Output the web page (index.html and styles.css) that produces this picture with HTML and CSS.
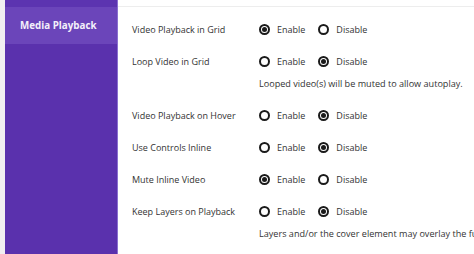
FILE: index.html
```html
<!DOCTYPE html>
<html>
<head>
<meta charset="utf-8">
<link rel="stylesheet" href="styles.css">
</head>
<body>
<div class="page">
  <div class="gutter"></div>
  <nav class="sidebar">
    <div class="sidebar-top"></div>
    <div class="nav-item active">Media Playback</div>
  </nav>
  <main class="content">
    <div class="row">
      <div class="label">Video Playback in Grid</div>
      <div class="options">
        <span class="opt"><span class="radio checked"></span>Enable</span>
        <span class="opt"><span class="radio"></span>Disable</span>
      </div>
    </div>
    <div class="row">
      <div class="label">Loop Video in Grid</div>
      <div class="options">
        <span class="opt"><span class="radio"></span>Enable</span>
        <span class="opt"><span class="radio checked"></span>Disable</span>
      </div>
    </div>
    <div class="note">Looped video(s) will be muted to allow autoplay.</div>
    <div class="row">
      <div class="label">Video Playback on Hover</div>
      <div class="options">
        <span class="opt"><span class="radio"></span>Enable</span>
        <span class="opt"><span class="radio checked"></span>Disable</span>
      </div>
    </div>
    <div class="row">
      <div class="label">Use Controls Inline</div>
      <div class="options">
        <span class="opt"><span class="radio"></span>Enable</span>
        <span class="opt"><span class="radio checked"></span>Disable</span>
      </div>
    </div>
    <div class="row">
      <div class="label">Mute Inline Video</div>
      <div class="options">
        <span class="opt"><span class="radio checked"></span>Enable</span>
        <span class="opt"><span class="radio"></span>Disable</span>
      </div>
    </div>
    <div class="row">
      <div class="label">Keep Layers on Playback</div>
      <div class="options">
        <span class="opt"><span class="radio"></span>Enable</span>
        <span class="opt"><span class="radio checked"></span>Disable</span>
      </div>
    </div>
    <div class="note">Layers and/or the cover element may overlay the full video area.</div>
  </main>
</div>
</body>
</html>
```

FILE: styles.css
```css
html, body {
  margin: 0;
  padding: 0;
  background: #ffffff;
}
body {
  font-family: "Open Sans", "Noto Sans", sans-serif;
  color: #333333;
  overflow: hidden;
}
.page {
  display: flex;
  height: 254px;
  width: 474px;
  overflow: hidden;
}
.gutter {
  width: 5px;
  flex: none;
  background: #f1eff1;
}
.sidebar {
  width: 112px;
  flex: none;
  background: #5a31ad;
  border-right: 1px solid #8a6fd0;
  display: flex;
  flex-direction: column;
}
.sidebar-top {
  height: 7px;
  background: #5c34b0;
}
.nav-item {
  height: 37px;
  display: flex;
  align-items: center;
  padding-left: 15px;
  font-size: 9.8px;
  font-weight: 700;
  color: #f4f0fb;
}
.nav-item.active {
  background: #6b45ba;
}
.content {
  flex: 1;
  min-width: 0;
  margin-top: 6px;
  border-top: 1px solid #ededed;
  padding: 6px 0 0 14px;
  font-size: 9px;
  white-space: nowrap;
  overflow: hidden;
}
.row {
  height: 32px;
  display: flex;
  align-items: center;
}
.label {
  width: 127px;
  flex: none;
}
.options {
  display: flex;
  gap: 13px;
}
.opt {
  display: flex;
  align-items: center;
  gap: 7px;
}
.radio {
  width: 7px;
  height: 7px;
  border: 2px solid #1a1a1a;
  border-radius: 50%;
  display: inline-flex;
  align-items: center;
  justify-content: center;
}
.radio.checked::after {
  content: "";
  width: 5px;
  height: 5px;
  border-radius: 50%;
  background: #1a1a1a;
}
.note {
  padding-left: 127px;
  line-height: 14px;
  height: 22px;
  font-size: 9.1px;
}
```
